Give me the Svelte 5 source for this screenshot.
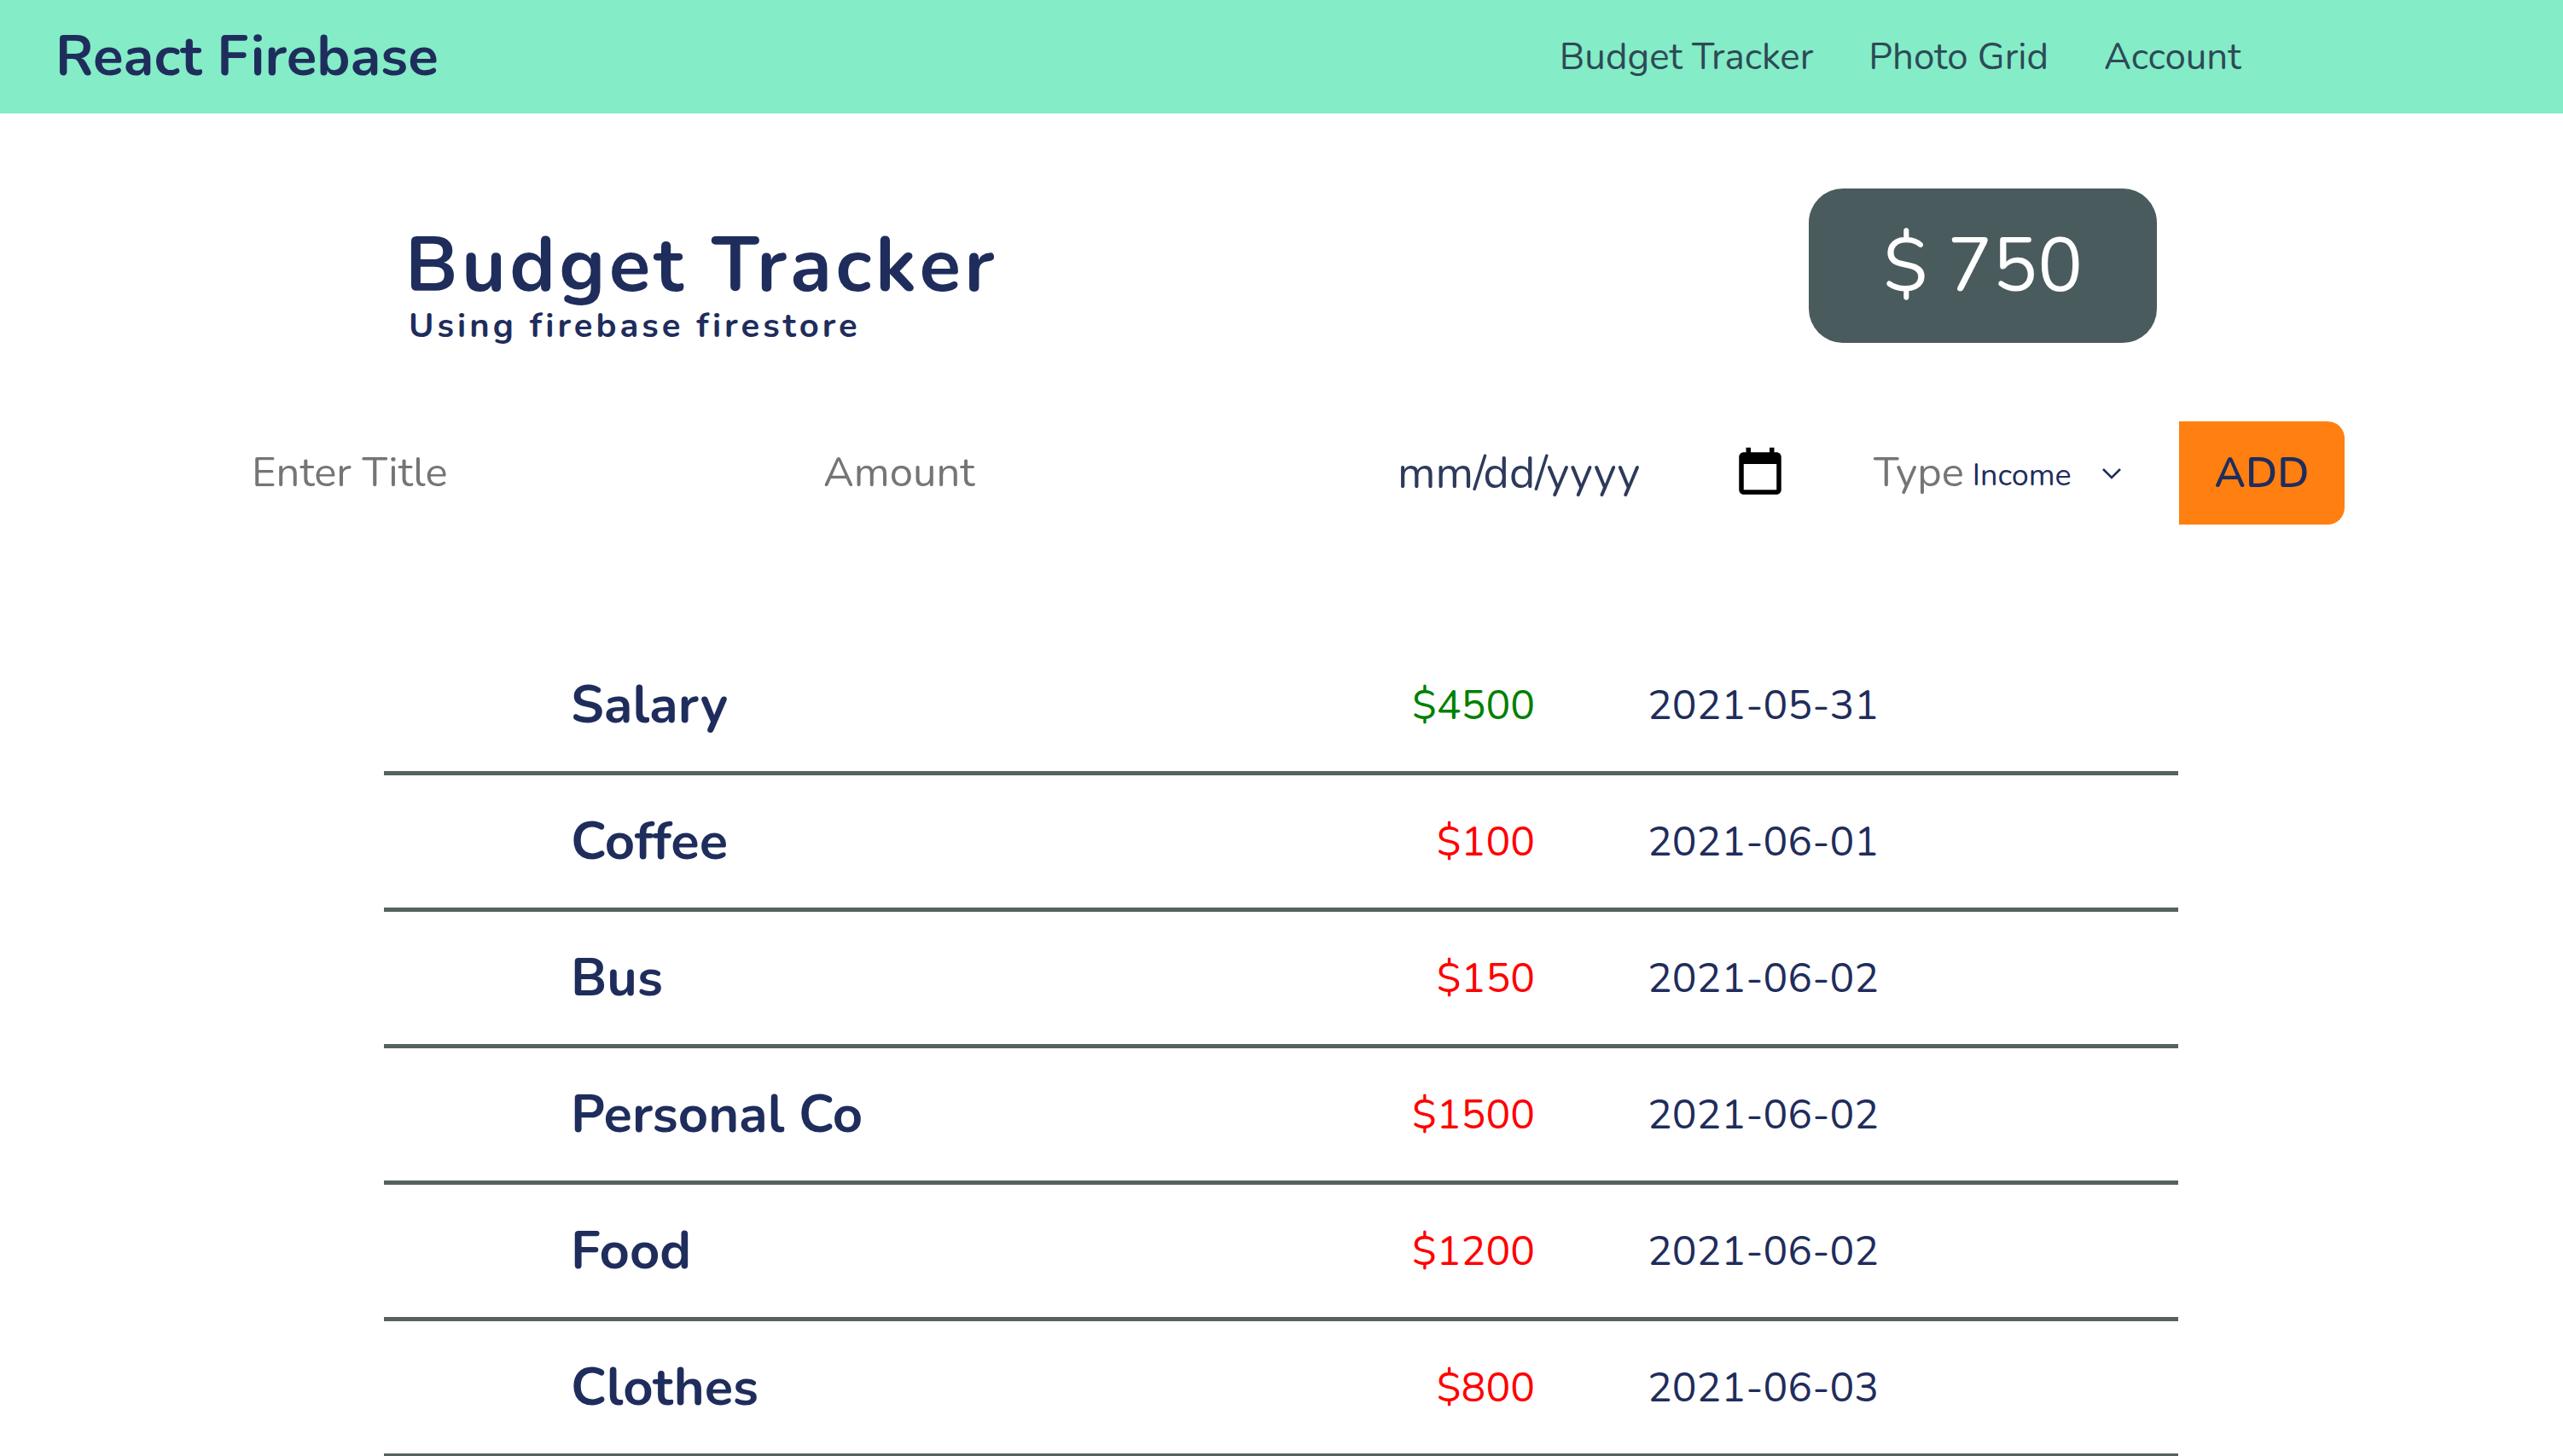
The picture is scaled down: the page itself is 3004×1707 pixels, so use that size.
<script>
  const rows = [
    { title: 'Salary', amount: '$4500', date: '2021-05-31', income: true },
    { title: 'Coffee', amount: '$100', date: '2021-06-01' },
    { title: 'Bus', amount: '$150', date: '2021-06-02' },
    { title: 'Personal Co', amount: '$1500', date: '2021-06-02' },
    { title: 'Food', amount: '$1200', date: '2021-06-02' },
    { title: 'Clothes', amount: '$800', date: '2021-06-03' }
  ];
</script>

<nav class="nav">
  <span class="brand">React Firebase</span>
  <div class="links">
    <span>Budget Tracker</span>
    <span>Photo Grid</span>
    <span>Account</span>
  </div>
</nav>

<main class="page">
  <header class="head">
    <div class="heading">
      <h1>Budget Tracker</h1>
      <p>Using firebase firestore</p>
    </div>
    <div class="total">$ 750</div>
  </header>

  <form class="form">
    <span class="field title">Enter Title</span>
    <span class="field amount">Amount</span>
    <div class="date">
      <span>mm/dd/yyyy</span>
      <svg width="66" height="66" viewBox="0 0 24 24" fill="#000">
        <path d="M19 3h-1V1h-2v2H8V1H6v2H5c-1.11 0-2 .9-2 2v14c0 1.1.89 2 2 2h14c1.1 0 2-.9 2-2V5c0-1.1-.9-2-2-2zm0 16H5V8h14v11z" />
      </svg>
    </div>
    <div class="type">
      <span class="field">Type</span>
      <span class="option">Income</span>
      <svg width="24" height="14" viewBox="0 0 24 14" fill="none" stroke="#1f2d5c" stroke-width="2.6">
        <path d="M2 2l10 10L22 2" />
      </svg>
    </div>
    <button type="button" class="add">ADD</button>
  </form>

  <ul class="list">
    {#each rows as row}
      <li class="row">
        <span class="name">{row.title}</span>
        <span class="money" class:income={row.income}>{row.amount}</span>
        <span class="when">{row.date}</span>
      </li>
    {/each}
  </ul>
</main>

<style>
  :global(body) {
    font-family: 'Nunito', 'Open Sans', 'Noto Sans', sans-serif;
    color: #1f2d5c;
    background: #fff;
    overflow: hidden;
  }
  .nav {
    height: 133px;
    background: #84ecc6;
    display: flex;
    align-items: center;
    padding: 0 65px;
  }
  .brand {
    font-size: 65.5px;
    font-weight: 700;
    padding-bottom: 1px;
  }
  .links {
    margin-left: 1314px;
    display: flex;
    gap: 65px;
    font-size: 43.8px;
    color: #2d4a57;
  }
  .head {
    display: flex;
    align-items: flex-start;
    box-sizing: border-box;
    height: 269px;
    padding: 88px 0 0 475px;
  }
  .heading {
    width: 1645px;
    padding-top: 46px;
  }
  h1 {
    margin: 0;
    font-size: 89.5px;
    line-height: 90px;
    font-weight: 700;
    letter-spacing: 4.4px;
  }
  p {
    margin: 3px 0 0 4px;
    font-size: 40px;
    line-height: 44px;
    font-weight: 700;
    letter-spacing: 4px;
  }
  .total {
    width: 408px;
    height: 181px;
    border-radius: 40px;
    background: #4a5b5d;
    color: #fff;
    font-size: 88px;
    display: flex;
    align-items: center;
    justify-content: center;
  }
  .form {
    display: flex;
    align-items: center;
    height: 121px;
    margin-top: 92px;
    padding-left: 295px;
  }
  .field {
    font-size: 49px;
    color: #757575;
    padding-bottom: 2px;
  }
  .title {
    width: 670px;
  }
  .amount {
    width: 671px;
  }
  .date {
    width: 558px;
    padding-left: 2px;
    display: flex;
    align-items: center;
    font-size: 52px;
    color: #2d3a5c;
  }
  .date span {
    width: 392px;
  }
  .type {
    width: 358px;
    display: flex;
    align-items: center;
  }
  .option {
    font-size: 36px;
    margin: 6px 35px 0 10px;
  }
  .add {
    width: 194px;
    height: 121px;
    border: none;
    border-radius: 0 20px 20px 0;
    background: #ff7f11;
    color: #1f2d5c;
    font: 600 49.5px 'Nunito', 'Open Sans', sans-serif;
  }
  .list {
    list-style: none;
    margin: 134px 0 0 450px;
    padding: 0;
    width: 2103px;
  }
  .row {
    height: 155px;
    border-bottom: 5px solid #55625f;
    display: flex;
    align-items: center;
    font-size: 48px;
  }
  .name {
    width: 980px;
    padding-left: 219px;
    font-size: 61.5px;
    font-weight: 700;
  }
  .money {
    flex: 0 0 150px;
    text-align: right;
    color: #f00;
  }
  .income {
    color: #008000;
  }
  .when {
    margin-left: 132px;
  }
</style>
